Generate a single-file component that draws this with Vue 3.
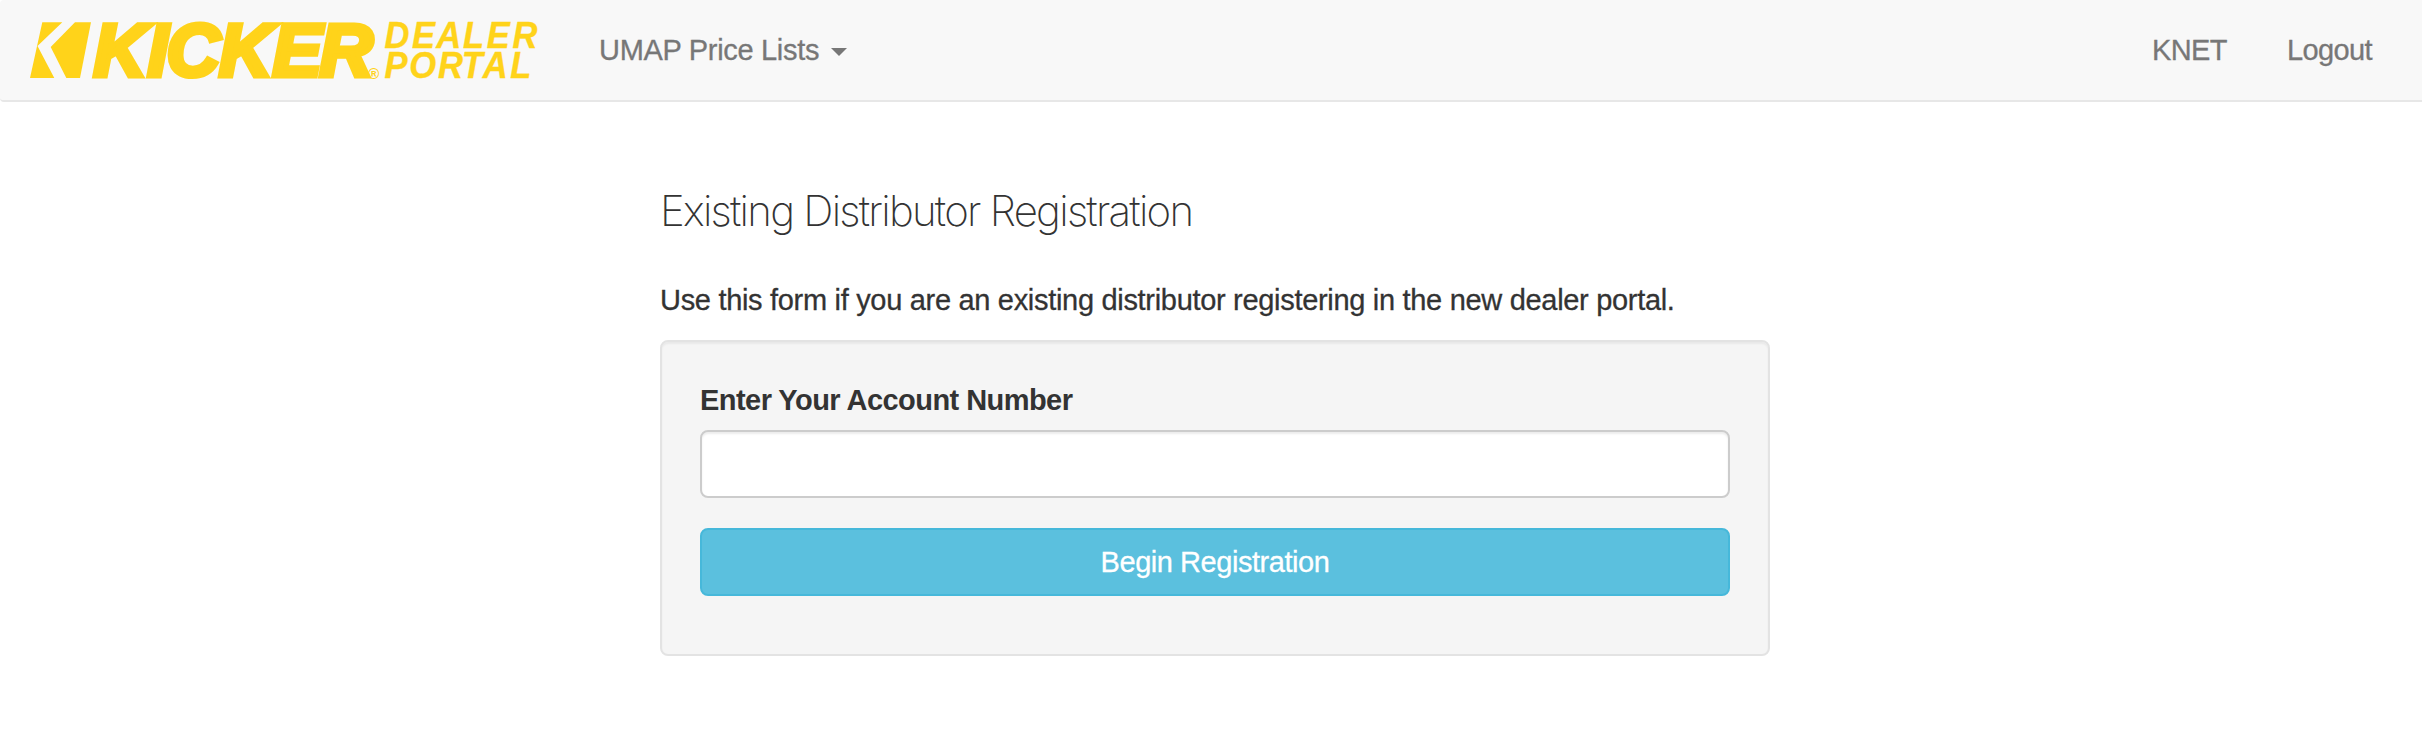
<template>
  <div class="page">
    <nav class="navbar">
      <a class="brand" href="#">
        <svg class="logo" viewBox="0 0 520 64" role="img" aria-label="Kicker Dealer Portal">
          <polygon points="14.3,4.3 34.3,4.3 9.5,28 26.3,60 2,60" />
          <polygon points="47,4.3 63,4.3 52,60 38.3,60 22.7,29" />
          <text class="logo-name" x="65.5 119.5 138.5 191 244.5 291.5" y="57.5">KICKER</text>
          <text class="logo-mark" x="340" y="61.3">®</text>
          <text class="logo-sub" transform="scale(0.92 1)" x="387.4 417.4 443.9 472.8 498.6 526.6" y="30">DEALER</text>
          <text class="logo-sub" transform="scale(0.92 1)" x="387.4 414.4 445.6 471.6 494.3 524.2" y="59.6">PORTAL</text>
        </svg>
      </a>

      <a class="nav-link price-lists" href="#">UMAP Price Lists<span class="caret"></span></a>

      <div class="nav-right">
        <a
          v-for="link in links"
          :key="link"
          class="nav-link"
          href="#"
        >{{ link }}</a>
      </div>
    </nav>

    <main class="container">
      <h3>Existing Distributor Registration</h3>
      <p class="intro">Use this form if you are an existing distributor registering in the new dealer portal.</p>

      <form class="well" @submit.prevent>
        <label for="account">Enter Your Account Number</label>
        <input id="account" v-model="account" type="text" class="form-control" />
        <button type="submit" class="btn-info">Begin Registration</button>
      </form>
    </main>
  </div>
</template>

<script setup>
import { ref } from 'vue'

const links = ['KNET', 'Logout']
const account = ref('')
</script>

<style>
body {
  margin: 0;
  background: #fff;
}
</style>

<style scoped>
.page {
  font-family: "Helvetica Neue", "Liberation Sans", Arial, sans-serif;
  font-size: 29px;
  line-height: 40px;
  letter-spacing: -0.31px;
  color: #333;
}

.navbar {
  display: flex;
  align-items: center;
  box-sizing: border-box;
  height: 102px;
  padding: 0 50px 0 28px;
  background: #f8f8f8;
  border-bottom: 2px solid #e7e7e7;
  border-radius: 4px 0 0 4px;
}

.brand {
  display: flex;
  width: 520px;
}

.logo {
  width: 520px;
  height: 64px;
  overflow: visible;
  fill: #ffd31a;
  letter-spacing: 0;
}

.logo text {
  font-family: "Liberation Sans", Arial, sans-serif;
  font-weight: bold;
  font-style: italic;
}

.logo-name {
  font-size: 74px;
  stroke: #ffd31a;
  stroke-width: 5;
}

.logo .logo-mark {
  font-size: 15px;
}

.logo-sub {
  font-size: 37.5px;
  stroke: #ffd31a;
  stroke-width: 0.4;
}

.nav-link {
  color: #777;
  text-decoration: none;
  white-space: nowrap;
  -webkit-text-stroke: 0.3px #777;
}

.price-lists {
  display: flex;
  align-items: center;
  margin-left: 51px;
}

.caret {
  margin: 3px 0 0 12px;
  border-top: 8px solid #777;
  border-left: 8px solid transparent;
  border-right: 8px solid transparent;
}

.nav-right {
  display: flex;
  gap: 60px;
  margin-left: auto;
  letter-spacing: -0.6px;
}

.container {
  width: 1110px;
  margin: 0 auto 0 660px;
  padding-top: 84px;
}

h3 {
  margin: 0;
  font-family: Inter, sans-serif;
  font-size: 42px;
  font-weight: 200;
  line-height: 50px;
  letter-spacing: -1.75px;
  white-space: nowrap;
}

.intro {
  margin: 44px 0 20px;
  white-space: nowrap;
  -webkit-text-stroke: 0.3px #333;
}

.well {
  display: flex;
  flex-direction: column;
  box-sizing: border-box;
  height: 316px;
  padding: 38px;
  background: #f5f5f5;
  border: 2px solid #e3e3e3;
  border-radius: 8px;
  box-shadow: inset 0 2px 2px rgba(0, 0, 0, 0.05);
}

label {
  margin-bottom: 10px;
  font-weight: bold;
  letter-spacing: -0.55px;
}

.form-control {
  box-sizing: border-box;
  width: 100%;
  height: 68px;
  padding: 12px 24px;
  background: #fff;
  border: 2px solid #ccc;
  border-radius: 8px;
  outline: none;
  font: inherit;
  box-shadow: inset 0 2px 2px rgba(0, 0, 0, 0.075);
}

.btn-info {
  box-sizing: border-box;
  height: 68px;
  margin-top: 30px;
  padding: 0;
  background: #5bc0de;
  border: 2px solid #46b8da;
  border-radius: 8px;
  color: #fff;
  font: inherit;
  letter-spacing: -0.45px;
  -webkit-text-stroke: 0.3px #fff;
  cursor: pointer;
}
</style>
